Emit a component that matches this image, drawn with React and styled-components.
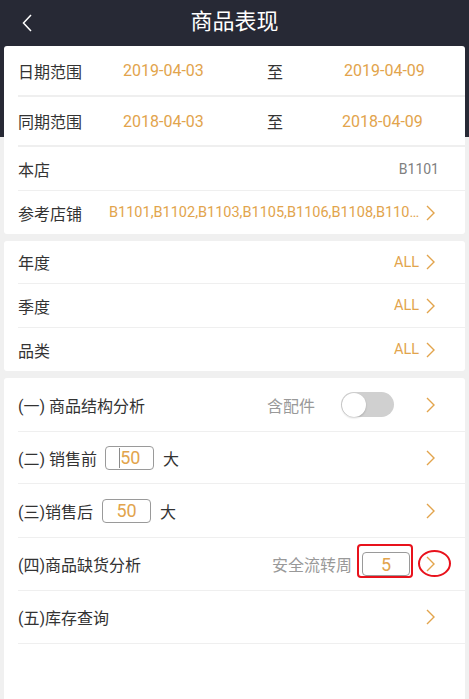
import React from 'react';
import styled, { createGlobalStyle } from 'styled-components';

const ORANGE = '#e2a44c';

const GlobalStyle = createGlobalStyle`
  body {
    margin: 0;
    min-height: 100vh;
    font-family: Roboto, "Noto Sans CJK SC", sans-serif;
    background: linear-gradient(to bottom, #272935 0, #272935 137px, #f0f0f0 137px);
  }
`;

const Header = styled.header`
  height: 46px;
  display: grid;
  grid-template-columns: 1fr auto 1fr;
  align-items: center;
  color: #fff;
`;

const BackButton = styled.div`
  justify-self: start;
  padding-left: 22px;
  display: flex;
  align-items: center;
`;

const Title = styled.h1`
  margin: 0;
  font-size: 22px;
  font-weight: 400;
  line-height: 1;
  padding-bottom: 2px;
`;

const Cards = styled.main`
  display: flex;
  flex-direction: column;
  gap: 7px;
  padding: 0 4px;
`;

const Card = styled.section`
  background: #fff;
  border-radius: 3px;
  display: flex;
  flex-direction: column;
  padding-bottom: ${(p) => p.$tail || 0}px;
`;

const Row = styled.div`
  box-sizing: border-box;
  height: ${(p) => p.$h}px;
  margin-left: 14px;
  padding-right: ${(p) => (p.$pr != null ? p.$pr : 30)}px;
  display: flex;
  align-items: center;
  border-bottom: ${(p) => p.$line || 0}px solid #efefef;
`;

const DateRow = styled(Row)`
  display: grid;
  grid-template-columns: 105px 144px 77px 1fr;
`;

const Label = styled.span`
  font-size: 16px;
  color: #333;
  white-space: nowrap;
  flex: ${(p) => (p.$grow ? 1 : 'none')};
`;

const DateText = styled.span`
  font-size: 16px;
  color: ${ORANGE};
`;

const Muted = styled.span`
  font-size: ${(p) => p.$size || 16}px;
  color: ${(p) => p.$color || '#999'};
`;

const StoreList = styled.span`
  flex: 1;
  min-width: 0;
  margin-left: 27px;
  font-size: 14.5px;
  color: ${ORANGE};
  white-space: nowrap;
  overflow: hidden;
  text-overflow: ellipsis;
`;

const AllValue = styled.span`
  margin-left: auto;
  font-size: 14.5px;
  color: ${ORANGE};
`;

const ChevronBox = styled.span`
  position: relative;
  display: flex;
  align-items: center;
  margin-left: ${(p) => p.$ml || 0}px;
`;

const RedEllipse = styled.span`
  position: absolute;
  box-sizing: border-box;
  left: -8px;
  top: -6px;
  width: 33px;
  height: 27px;
  border: 2.5px solid #e8121c;
  border-radius: 50%;
`;

const Toggle = styled.span`
  width: 53px;
  height: 25px;
  border-radius: 13px;
  background: #d0d0d0;
  margin-left: 26px;
  display: flex;
  align-items: center;
  padding: 0 1px;
  box-sizing: border-box;
`;

const Knob = styled.span`
  width: 24px;
  height: 24px;
  border-radius: 50%;
  background: #fff;
  box-shadow: 0 1px 2px rgba(0, 0, 0, 0.2);
`;

const NumBox = styled.span`
  position: relative;
  box-sizing: border-box;
  width: ${(p) => p.$w || 49}px;
  height: 24px;
  margin-left: ${(p) => p.$ml || 0}px;
  margin-right: ${(p) => p.$mr || 0}px;
  border: 1px solid #9a9a9a;
  border-radius: 4px;
  display: flex;
  align-items: center;
  justify-content: center;
  font-size: 18px;
  color: ${ORANGE};
`;

const Caret = styled.span`
  width: 1.5px;
  height: 20px;
  background: #8a8a8a;
`;

const RedRect = styled.span`
  position: absolute;
  left: -6px;
  right: -4px;
  top: -9px;
  bottom: -3px;
  border: 2.5px solid #e8121c;
  border-radius: 4px;
`;

const Chevron = ({ ml, mark }) => (
  <ChevronBox $ml={ml}>
    <svg width="9" height="16" viewBox="0 0 9 16">
      <path d="M1 1 L8 8 L1 15" fill="none" stroke={ORANGE} strokeWidth="1.4" />
    </svg>
    {mark && <RedEllipse />}
  </ChevronBox>
);

const filters = [
  { name: '年度', h: 43, line: 1 },
  { name: '季度', h: 44, line: 1 },
  { name: '品类', h: 43, line: 0 },
];

export default function App() {
  return (
    <>
      <GlobalStyle />
      <Header>
        <BackButton>
          <svg width="10" height="18" viewBox="0 0 10 18">
            <path d="M9 1 L1.5 9 L9 17" fill="none" stroke="#fff" strokeWidth="1.5" />
          </svg>
        </BackButton>
        <Title>商品表现</Title>
        <span />
      </Header>

      <Cards>
        <Card>
          <DateRow $h={51} $line={2}>
            <Label>日期范围</Label>
            <DateText>2019-04-03</DateText>
            <Label>至</Label>
            <DateText>2019-04-09</DateText>
          </DateRow>
          <DateRow $h={50} $line={2}>
            <Label>同期范围</Label>
            <DateText>2018-04-03</DateText>
            <Label>至</Label>
            <DateText style={{ marginLeft: -2 }}>2018-04-09</DateText>
          </DateRow>
          <Row $h={44} $line={1} $pr={26}>
            <Label $grow>本店</Label>
            <Muted $size={14} $color="#808080">B1101</Muted>
          </Row>
          <Row $h={43}>
            <Label>参考店铺</Label>
            <StoreList>B1101,B1102,B1103,B1105,B1106,B1108,B1109,B1110</StoreList>
            <Chevron ml={4} />
          </Row>
        </Card>

        <Card>
          {filters.map((f) => (
            <Row key={f.name} $h={f.h} $line={f.line}>
              <Label>{f.name}</Label>
              <AllValue>ALL</AllValue>
              <Chevron ml={7} />
            </Row>
          ))}
        </Card>

        <Card $tail={60}>
          <Row $h={54} $line={1}>
            <Label $grow>(一) 商品结构分析</Label>
            <Muted>含配件</Muted>
            <Toggle>
              <Knob />
            </Toggle>
            <Chevron ml={32} />
          </Row>
          <Row $h={52} $line={1}>
            <Label>(二) 销售前</Label>
            <NumBox $ml={8} $mr={9}>
              <Caret />
              50
            </NumBox>
            <Label $grow>大</Label>
            <Chevron />
          </Row>
          <Row $h={54} $line={1}>
            <Label>(三)销售后</Label>
            <NumBox $ml={9} $mr={9}>50</NumBox>
            <Label $grow>大</Label>
            <Chevron />
          </Row>
          <Row $h={53} $line={1}>
            <Label $grow>(四)商品缺货分析</Label>
            <Muted>安全流转周</Muted>
            <NumBox $w={48} $ml={10} $mr={16}>
              5
              <RedRect />
            </NumBox>
            <Chevron mark />
          </Row>
          <Row $h={53} $line={1}>
            <Label $grow>(五)库存查询</Label>
            <Chevron />
          </Row>
        </Card>
      </Cards>
    </>
  );
}
